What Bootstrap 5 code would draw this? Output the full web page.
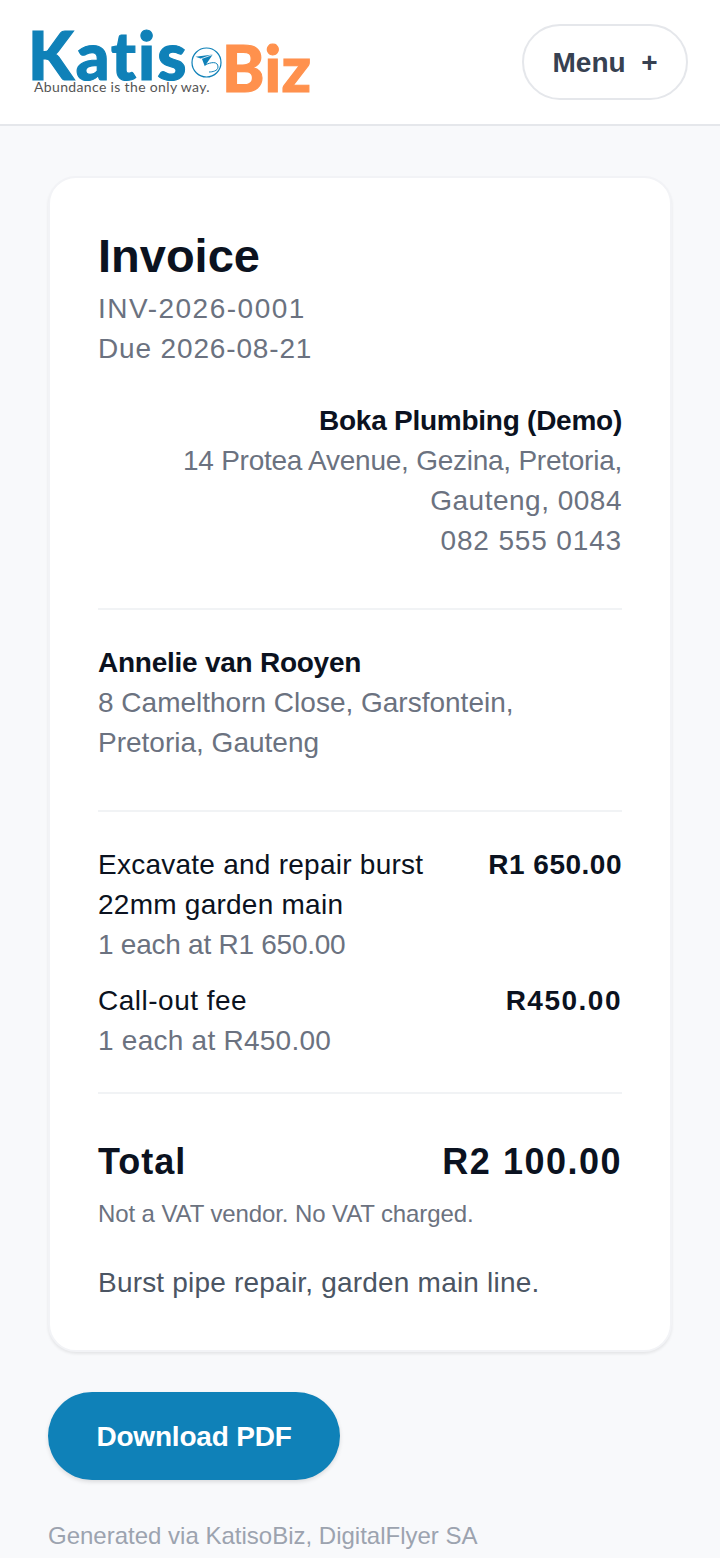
<!DOCTYPE html>
<html lang="en">
<head>
  <meta charset="UTF-8" />
  <meta name="viewport" content="width=device-width, initial-scale=1.0"/>
  <title>Invoice - KatisoBiz</title>
  <link href="https://cdn.jsdelivr.net/npm/bootstrap@5.3.0/dist/css/bootstrap.min.css" rel="stylesheet" />
  <style>
    body {
      background-color: #f8f9fb;
      font-family: "Liberation Sans", Arial, sans-serif;
      font-size: 28px;
      line-height: 40px;
      color: #6b7280;
    }
    .top-bar {
      height: 126px;
      background: #fff;
      border-bottom: 2px solid #e5e7eb;
      padding: 0 32px;
    }
    .logo-wrap {
      width: 284px;
      height: 70px;
      margin-top: -2px;
      position: relative;
      font-family: Lato, sans-serif;
      font-weight: 900;
      white-space: nowrap;
    }
    .logo-katiso {
      position: absolute;
      left: -4px;
      top: 4px;
      font-size: 66px;
      line-height: 50px;
      color: #0f81b8;
      letter-spacing: 2px;
      -webkit-text-stroke: 1.2px #0f81b8;
    }
    .logo-biz {
      position: absolute;
      left: 190px;
      top: 17px;
      font-size: 64px;
      line-height: 50px;
      color: #ff914d;
      letter-spacing: .5px;
      -webkit-text-stroke: 1.2px #ff914d;
    }
    .logo-globe {
      position: absolute;
      left: 159px;
      top: 21px;
      width: 31px;
      height: 31px;
    }
    .logo-tag {
      position: absolute;
      left: 2px;
      top: 53px;
      font-weight: 400;
      font-size: 14px;
      line-height: 16px;
      letter-spacing: .35px;
      color: #555;
    }
    .menu-btn {
      width: 166px;
      height: 76px;
      background: #fff;
      border: 2px solid #e5e7eb;
      border-radius: 38px;
      color: #374151;
      font-size: 28px;
      font-weight: 700;
      padding: 2px 0 0;
    }
    .page-main { padding: 50px 48px 0; }
    .invoice-card {
      background: #fff;
      border: 2px solid #f2f3f6;
      border-radius: 28px;
      padding: 48px;
      box-shadow: 0 2px 3px rgba(0,0,0,0.08);
      height: 1176px;
    }
    .inv-title {
      font-size: 47px;
      line-height: 60px;
      font-weight: 700;
      color: #0b1220;
      margin: 0 0 3px;
    }
    .ink { color: #0b1220; }
    .strong-ink { color: #0b1220; font-weight: 700; }
    .soft-rule { border: 0; border-top: 2px solid #f1f3f5; opacity: 1; margin: 47px 0 33px; }
    .soft-rule-tight { margin-top: 31px; margin-bottom: 42px; }
    .total-row {
      font-size: 36px;
      line-height: 52px;
      font-weight: 700;
      color: #0b1220;
    }
    .vat-note { font-size: 24px; line-height: 36px; margin-top: 8px; letter-spacing: -.1px; }
    .memo { color: #4b5563; margin-top: 31px; letter-spacing: .2px; }
    .pdf-btn {
      height: 88px;
      width: 292px;
      background: #0f81b8;
      color: #fff;
      border: 0;
      border-radius: 44px;
      font-size: 28px;
      font-weight: 700;
      letter-spacing: -.2px;
      padding-top: 8px;
      box-shadow: 0 2px 4px rgba(0,0,0,0.12);
      margin-top: 40px;
    }
    .gen-note { color: #9ca3af; font-size: 24px; margin-top: 36px; }
    .track-xl { letter-spacing: 1.5px; }
    .track-lg { letter-spacing: .85px; }
    .track-md { letter-spacing: .5px; }
    .track-sm { letter-spacing: .25px; }
    .track-neg { letter-spacing: -.25px; }
    .track-total { letter-spacing: 1px; }
  </style>
</head>
<body>
  <header class="top-bar d-flex justify-content-between align-items-center">
    <div class="logo-wrap">
      <span class="logo-katiso">Katis</span>
      <svg class="logo-globe" viewBox="0 0 31 31" fill="none">
        <circle cx="15.5" cy="15.5" r="14.5" stroke="#0f81b8" stroke-width="1.2"/>
        <path d="M21.8 7.5 L4.5 9.8 L11 12 L13.8 19.2 Z" fill="#0f81b8"/>
        <path d="M21.8 7.5 L10 11.8" stroke="#fff" stroke-width=".8"/>
        <path d="M14 18 C20 15 27 14 27 20 C27 24 21 25 18 25" stroke="#0f81b8" stroke-width="1"/>
      </svg>
      <span class="logo-biz">Biz</span>
      <span class="logo-tag">Abundance is the only way.</span>
    </div>
    <button class="menu-btn btn">Menu &nbsp;+</button>
  </header>

  <main class="page-main">
    <section class="invoice-card">
      <h1 class="inv-title">Invoice</h1>
      <div class="track-xl">INV-2026-0001</div>
      <div class="track-lg">Due 2026-08-21</div>

      <div class="text-end mt-4 pt-2">
        <div class="strong-ink track-neg">Boka Plumbing (Demo)</div>
        <div class="track-neg">14 Protea Avenue, Gezina, Pretoria,</div>
        <div class="track-md">Gauteng, 0084</div>
        <div class="track-lg">082 555 0143</div>
      </div>

      <hr class="soft-rule" />

      <div class="strong-ink track-neg">Annelie van Rooyen</div>
      <div>8 Camelthorn Close, Garsfontein, Pretoria, Gauteng</div>

      <hr class="soft-rule" />

      <div class="d-flex justify-content-between gap-4">
        <div>
          <div class="ink track-sm">Excavate and repair burst 22mm garden main</div>
          <div class="track-neg">1 each at R1 650.00</div>
        </div>
        <div class="strong-ink text-nowrap track-md">R1 650.00</div>
      </div>
      <div class="d-flex justify-content-between gap-4 mt-3">
        <div>
          <div class="ink track-md">Call-out fee</div>
          <div class="track-sm">1 each at R450.00</div>
        </div>
        <div class="strong-ink text-nowrap track-xl">R450.00</div>
      </div>

      <hr class="soft-rule soft-rule-tight" />

      <div class="total-row d-flex justify-content-between">
        <span class="track-total">Total</span>
        <span class="track-xl">R2 100.00</span>
      </div>
      <div class="vat-note">Not a VAT vendor. No VAT charged.</div>
      <div class="memo">Burst pipe repair, garden main line.</div>
    </section>

    <button class="pdf-btn btn">Download PDF</button>
    <div class="gen-note">Generated via KatisoBiz, DigitalFlyer SA</div>
  </main>
</body>
</html>
